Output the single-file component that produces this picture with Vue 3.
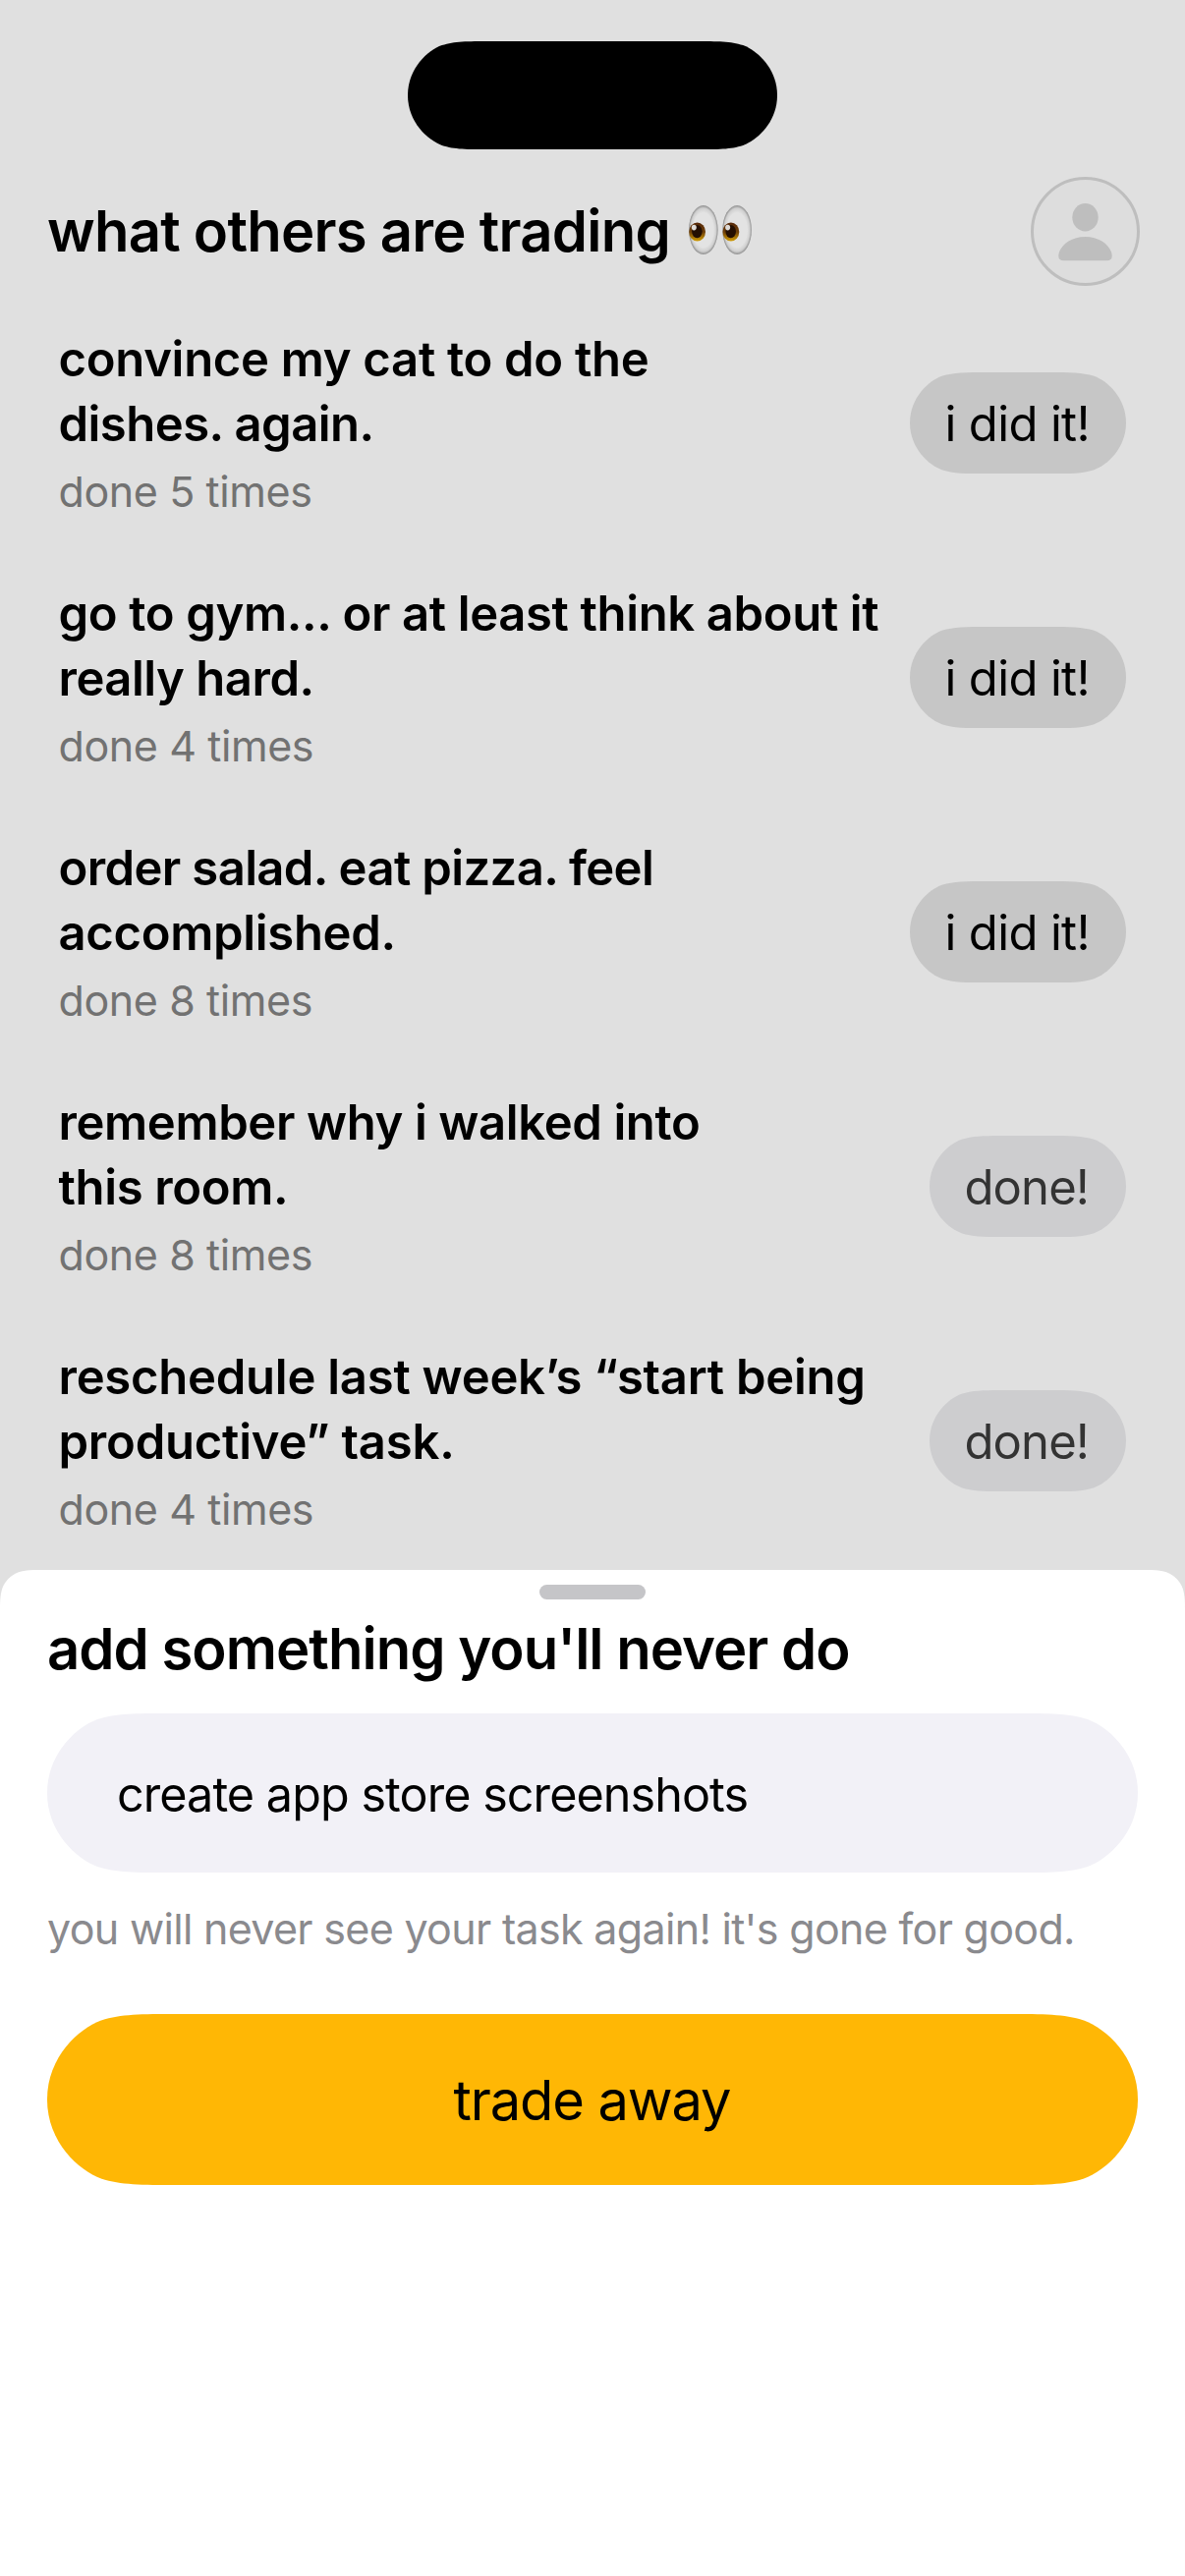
<script setup>
const tasks = [
  {
    lines: [
      { text: 'convince my cat to do the', tracking: -0.3 },
      { text: 'dishes. again.', tracking: -0.53 },
    ],
    count: 5,
    done: false,
  },
  {
    lines: [
      { text: 'go to gym... or at least think about it', tracking: -0.36 },
      { text: 'really hard.', tracking: -0.48 },
    ],
    count: 4,
    done: false,
  },
  {
    lines: [
      { text: 'order salad. eat pizza. feel', tracking: -0.62 },
      { text: 'accomplished.', tracking: -0.32 },
    ],
    count: 8,
    done: false,
  },
  {
    lines: [
      { text: 'remember why i walked into', tracking: -0.38 },
      { text: 'this room.', tracking: -0.35 },
    ],
    count: 8,
    done: true,
  },
  {
    lines: [
      { text: 'reschedule last week’s “start being', tracking: -0.25 },
      { text: 'productive” task.', tracking: -0.22 },
    ],
    count: 4,
    done: true,
  },
]

// Capsule with continuous corners: round ends that ease into the flat edges.
function capsule(w, h) {
  const r = h / 2
  const p = (x, y) => `${(x * r).toFixed(2)} ${(y * r).toFixed(2)}`
  const q = (x, y) => `${(w - x * r).toFixed(2)} ${(y * r).toFixed(2)}`
  return (
    `M${p(1.5287, 0)} L${q(1.5287, 0)}` +
    ` C${q(1.0885, 0)} ${q(0.8684, 0)} ${q(0.6315, 0.0749)}` +
    ` C${q(0.3728, 0.1691)} ${q(0, 0.5)} ${q(0, 1)}` +
    ` C${q(0, 1.5)} ${q(0.3728, 1.8309)} ${q(0.6315, 1.9251)}` +
    ` C${q(0.8684, 2)} ${q(1.0885, 2)} ${q(1.5287, 2)}` +
    ` L${p(1.5287, 2)}` +
    ` C${p(1.0885, 2)} ${p(0.8684, 2)} ${p(0.6315, 1.9251)}` +
    ` C${p(0.3728, 1.8309)} ${p(0, 1.5)} ${p(0, 1)}` +
    ` C${p(0, 0.5)} ${p(0.3728, 0.1691)} ${p(0.6315, 0.0749)}` +
    ` C${p(0.8684, 0)} ${p(1.0885, 0)} ${p(1.5287, 0)} Z`
  )
}
const clip = (w, h) => ({ clipPath: `path("${capsule(w, h)}")` })
</script>

<template>
  <div class="screen">
    <div class="island" :style="clip(376, 110)"></div>

    <header class="header">
      <h1 class="heading">
        what others are trading
        <svg class="eyes" viewBox="0 0 66 54" role="img" aria-label="eyes">
          <defs>
            <radialGradient id="ball">
              <stop offset="0.7" stop-color="#e3e3e3" />
              <stop offset="0.88" stop-color="#cfcfcf" />
              <stop offset="1" stop-color="#8c8c8c" />
            </radialGradient>
            <linearGradient id="iris" x1="0" y1="0" x2="0" y2="1">
              <stop offset="0" stop-color="#57290a" />
              <stop offset="0.5" stop-color="#6e3f08" />
              <stop offset="1" stop-color="#d09c06" />
            </linearGradient>
          </defs>
          <g v-for="dx in [0, 34.3]" :key="dx" :transform="`translate(${dx} 0)`">
            <ellipse cx="15.8" cy="27" rx="14.8" ry="25" fill="url(#ball)" />
            <ellipse cx="9.6" cy="29" rx="8.4" ry="9.4" fill="url(#iris)" />
            <ellipse cx="9.4" cy="28.6" rx="5.3" ry="6.6" fill="#240f02" />
            <ellipse cx="6.3" cy="24.6" rx="2.5" ry="2.8" fill="#dedad6" />
          </g>
        </svg>
      </h1>
      <svg class="avatar" viewBox="0 0 111 111">
        <circle cx="55.5" cy="55.5" r="54" fill="#dddddd" stroke="#bebebe" stroke-width="3" />
        <ellipse cx="55.5" cy="41.3" rx="13.2" ry="14.2" fill="#bebebe" />
        <path
          d="M33.5 85.3 Q28.3 85.3 28.3 80.6 C28.3 71.5 39.5 61 55.5 61 C71.5 61 82.7 71.5 82.7 80.6 Q82.7 85.3 77.5 85.3 Z"
          fill="#bebebe"
        />
      </svg>
    </header>

    <ul class="list">
      <li v-for="(task, i) in tasks" :key="i" class="task">
        <div class="body">
          <div
            v-for="line in task.lines"
            :key="line.text"
            class="line"
            :style="{ letterSpacing: line.tracking + 'px' }"
          >{{ line.text }}</div>
          <div class="count">done {{ task.count }} times</div>
        </div>
        <button
          class="pill"
          :class="{ done: task.done }"
          :style="clip(task.done ? 200 : 220, 103)"
        >{{ task.done ? 'done!' : 'i did it!' }}</button>
      </li>
    </ul>

    <section class="sheet">
      <div class="handle"></div>
      <h2 class="title">add something you'll never do</h2>
      <div class="field" :style="clip(1110, 162)">create app store screenshots</div>
      <p class="hint">you will never see your task again! it's gone for good.</p>
      <button class="trade" :style="clip(1110, 174)">trade away</button>
    </section>
  </div>
</template>

<style>
body {
  background: #e0e0e0;
}
</style>

<style scoped>
.screen {
  box-sizing: border-box;
  display: flex;
  flex-direction: column;
  width: 1206px;
  height: 2622px;
  padding-top: 42px;
  overflow: hidden;
  background: #e0e0e0;
  color: #000;
  font-family: Inter, 'Liberation Sans', sans-serif;
  font-kerning: normal;
}
.island {
  flex: none;
  align-self: center;
  width: 376px;
  height: 110px;
  background: #000;
}
.header {
  flex: none;
  display: flex;
  align-items: center;
  justify-content: space-between;
  height: 111px;
  margin-top: 27.5px;
  padding: 0 46.5px 0 48px;
}
.heading {
  display: flex;
  align-items: center;
  margin: 0;
  font-size: 58px;
  font-weight: 600;
  line-height: 70px;
  letter-spacing: -0.75px;
  white-space: nowrap;
}
.eyes {
  width: 66px;
  height: 54px;
  margin: -2px 0 0 18.5px;
}
.avatar {
  width: 111px;
  height: 111px;
}
.list {
  flex: none;
  box-sizing: border-box;
  height: 1307.5px;
  margin: 0;
  padding: 42.5px 60px 0 59.5px;
  list-style: none;
}
.task {
  display: flex;
  align-items: flex-start;
  justify-content: space-between;
  height: 259px;
}
.line {
  font-size: 49px;
  font-weight: 600;
  line-height: 66px;
  white-space: nowrap;
}
.count {
  margin-top: 5px;
  color: #727272;
  font-size: 43px;
  line-height: 60px;
  letter-spacing: -0.4px;
}
.pill {
  flex: none;
  box-sizing: border-box;
  width: 220px;
  height: 103px;
  margin-top: 46px;
  padding: 2px 0 0 35.5px;
  border: 0;
  background: #c6c6c6;
  color: #000;
  font: 400 49px/101px Inter, 'Liberation Sans', sans-serif;
  letter-spacing: -0.65px;
  text-align: left;
  white-space: nowrap;
}
.pill.done {
  width: 200px;
  background: #cdcdcf;
  color: #333;
  letter-spacing: -0.9px;
}
.sheet {
  flex: 1;
  display: flex;
  flex-direction: column;
  padding: 15px 48px 0;
  background: #fff;
  clip-path: path('M0 1100 L0 46 C0 32.7 0 26 2.25 18.9 C5.07 11.2 11.2 5.07 18.9 2.25 C26 0 32.7 0 46 0 L1160 0 C1173.3 0 1180 0 1187.1 2.25 C1194.8 5.07 1200.93 11.2 1203.75 18.9 C1206 26 1206 32.7 1206 46 L1206 1100 Z');
}
.handle {
  align-self: center;
  width: 108px;
  height: 15px;
  border-radius: 7.5px;
  background: #c5c5c8;
}
.title {
  margin: 15px 0 0;
  font-size: 58px;
  font-weight: 600;
  line-height: 70px;
  letter-spacing: -0.96px;
  white-space: nowrap;
}
.field {
  height: 162px;
  margin-top: 31px;
  padding-left: 71px;
  background: #f2f1f7;
  font-size: 48.5px;
  line-height: 165px;
  letter-spacing: -0.94px;
}
.hint {
  margin: 27px 0 0;
  color: #8a8a8e;
  font-size: 43px;
  line-height: 60px;
  letter-spacing: -0.68px;
  white-space: nowrap;
}
.trade {
  box-sizing: border-box;
  height: 174px;
  margin-top: 57px;
  padding: 2px 1px 0 0;
  border: 0;
  background: #ffb705;
  color: #000;
  font: 400 56px/172px Inter, 'Liberation Sans', sans-serif;
  letter-spacing: -1.1px;
}
</style>
